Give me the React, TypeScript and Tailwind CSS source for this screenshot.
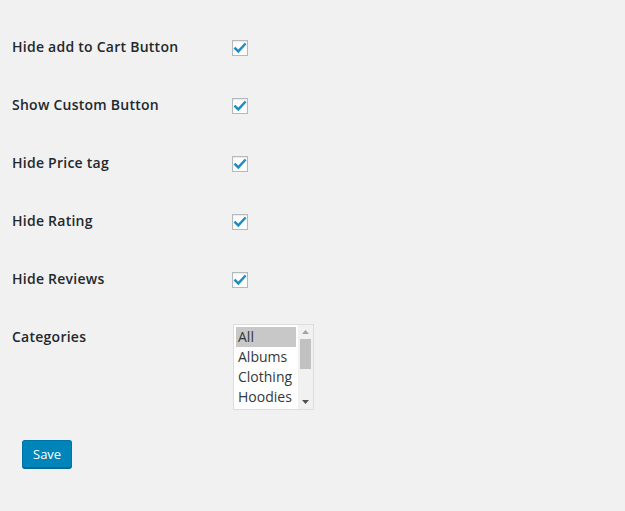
import React from "react";

const rows = ["Hide add to Cart Button", "Show Custom Button", "Hide Price tag", "Hide Rating", "Hide Reviews"];
const categories = ["All", "Albums", "Clothing", "Hoodies"];

const Checkbox = () => (
    <span className="mt-[22px] flex h-4 w-4 items-center justify-center border border-[#b4b9be] bg-white shadow-[inset_0_1px_2px_rgba(0,0,0,0.1)]">
        <svg width="14" height="14" viewBox="0 0 14 14" fill="none">
            <path d="M2.3 7.4 L5.3 10.4 L11.8 3.4" stroke="#1e8cbe" strokeWidth="2.4" strokeLinecap="square" />
        </svg>
    </span>
);

export default function App() {
    return (
        <div className="min-h-[511px] w-full bg-[#f1f1f1] pl-3 pt-[18px] font-['Open_Sans',sans-serif] text-[14px] text-[#23282d]">
            {rows.map((label) => (
                <div key={label} className="flex h-[58px]">
                    <div className="w-[220px] pt-5 font-semibold leading-[1.3] tracking-[0.25px]">{label}</div>
                    <Checkbox />
                </div>
            ))}

            <div className="flex h-[132px]">
                <div className="w-[221px] pt-5 font-semibold leading-[1.3] tracking-[0.25px]">Categories</div>
                <div className="mt-4 flex h-[86px] w-[81px] border border-[#dddddd] bg-white">
                    <div className="flex flex-1 flex-col p-[2px] pr-0 text-[#32373c]">
                        {categories.map((c, i) => (
                            <div
                                key={c}
                                className={`h-5 w-[60px] pl-[2px] leading-5 ${i === 0 ? "bg-[#c8c8c8]" : ""}`}
                            >
                                {c}
                            </div>
                        ))}
                    </div>
                    <div className="ml-[2px] flex w-[15px] flex-col items-center bg-[#f1f1f1]">
                        <div className="flex h-[14px] w-full items-center justify-center">
                            <svg width="7" height="4" viewBox="0 0 7 4">
                                <path d="M0 4 L3.5 0 L7 4 Z" fill="#a3a3a3" />
                            </svg>
                        </div>
                        <div className="h-[30px] w-[11px] bg-[#c1c1c1]" />
                        <div className="flex-1" />
                        <div className="flex h-[14px] w-full items-center justify-center">
                            <svg width="7" height="4" viewBox="0 0 7 4">
                                <path d="M0 0 L7 0 L3.5 4 Z" fill="#505050" />
                            </svg>
                        </div>
                    </div>
                </div>
            </div>

            <div className="pl-[10px]">
                <button className="h-7 rounded-[3px] border border-[#0073aa] border-b-[#006799] bg-[#0085ba] px-[10px] pb-px text-[13px] leading-[26px] text-white shadow-[0_1px_0_#006799]">
                    Save
                </button>
            </div>
        </div>
    );
}
